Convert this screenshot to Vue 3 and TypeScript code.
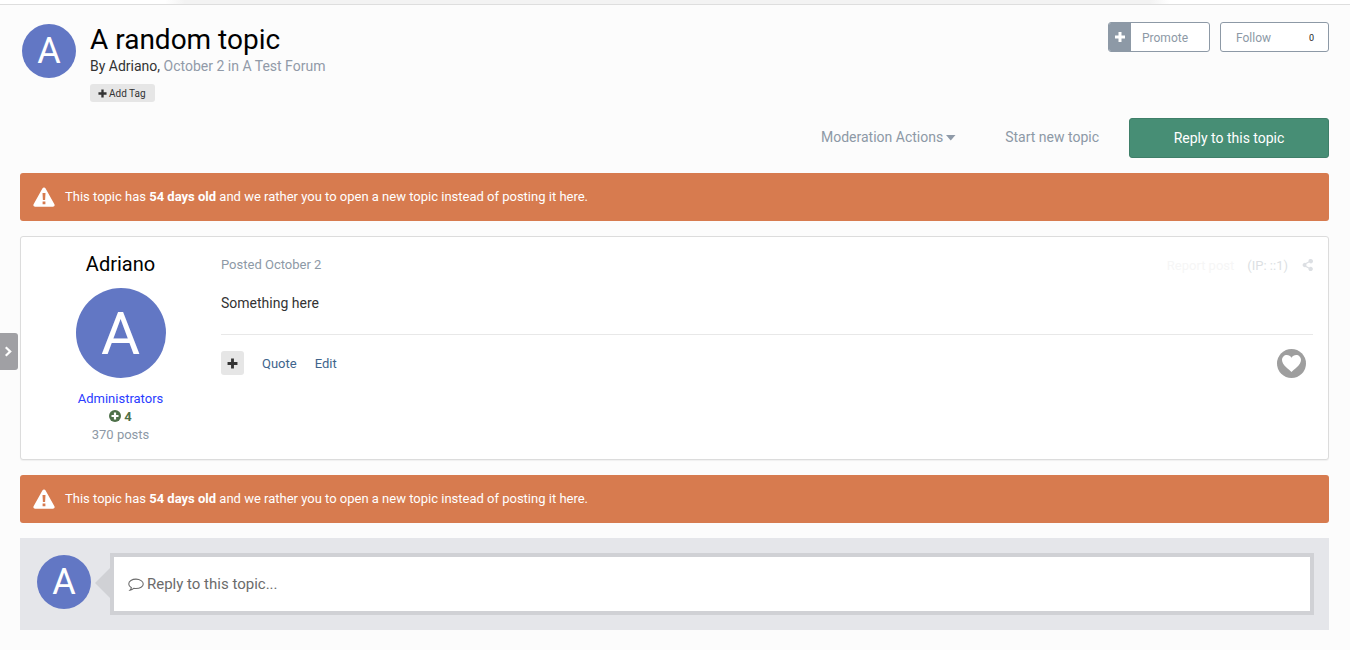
<script setup lang="ts">
const alertText = { before: 'This topic has ', bold: '54 days old', after: ' and we rather you to open a new topic instead of posting it here.' }
const alerts = [0, 1]
</script>

<template>
  <div class="page">
    <div class="topstrip"></div>

    <header class="head">
      <div class="avatar av54">A</div>
      <div class="headtext">
        <h1 class="title">A random topic</h1>
        <p class="byline">By Adriano, <span class="muted">October 2 in A Test Forum</span></p>
        <span class="addtag">
          <svg class="plus9" viewBox="0 0 10 10"><path d="M3.700 0.500h2.600v3.200h3.200v2.600H6.300v3.200H3.700V6.300H0.500V3.700h3.200z" fill="#333"/></svg>
          Add Tag
        </span>
      </div>
      <div class="headbtns">
        <div class="promote">
          <span class="promoteicon"><svg width="10" height="10" viewBox="0 0 10 10"><path d="M3.500 0h3v3.500H10v3H6.500V10h-3V6.500H0v-3h3.500z" fill="#fff"/></svg></span>
          <span class="promotelabel">Promote</span>
        </div>
        <div class="follow"><span class="followlabel">Follow</span><span class="count">0</span></div>
      </div>
    </header>

    <div class="actions">
      <span class="actionlink">Moderation Actions <svg class="caret" viewBox="0 0 10 6"><path d="M0 0h9.500L4.750 5.500z" fill="#8f9aa8"/></svg></span>
      <span class="actionlink start">Start new topic</span>
      <span class="replybtn">Reply to this topic</span>
    </div>

    <template v-for="(a, i) in alerts" :key="a">
      <div class="alert">
        <svg class="warn" width="22" height="20" viewBox="0 0 22 20">
          <path d="M11 .6c.7 0 1.300.4 1.600 1l8.800 15.600c.7 1.200-.2 2.600-1.600 2.600H2.200C.8 19.800-.1 18.400.6 17.200L9.400 1.600c.3-.6.900-1 1.600-1z" fill="#fff"/>
          <path d="M9.500 6h3l-.4 7h-2.200zM9.600 14.500h2.800v2.800H9.600z" fill="#d77b4f"/>
        </svg>
        <span class="alerttext">{{ alertText.before }}<b>{{ alertText.bold }}</b>{{ alertText.after }}</span>
      </div>

      <article v-if="i === 0" class="post">
        <aside class="author">
          <div class="authorname">Adriano</div>
          <div class="avatar av90">A</div>
          <div class="group">Administrators</div>
          <div class="rep">
            <svg width="12" height="12" viewBox="0 0 12 12"><circle cx="6" cy="6" r="6" fill="#4e7049"/><path d="M4.900 2.500h2.200v2.400h2.400v2.200H7.100v2.400H4.900V7.100H2.500V4.900h2.400z" fill="#fff"/></svg>
            <b>4</b>
          </div>
          <div class="posts">370 posts</div>
        </aside>
        <div class="body">
          <div class="meta">
            <span class="posted">Posted October 2</span>
            <span class="tools">
              <span class="report">Report post</span>
              <span class="ip">(IP: ::1)</span>
              <svg width="11" height="12" viewBox="0 0 11 12"><path d="M8.800 0a2.200 2.200 0 1 1-1.700 3.600L4.300 5.100a2.300 2.300 0 0 1 0 1.800l2.800 1.500a2.200 2.200 0 1 1-.6 1.100L3.700 8a2.200 2.200 0 1 1 0-4l2.800-1.500A2.200 2.200 0 0 1 8.800 0z" fill="#dcdfe3"/></svg>
            </span>
          </div>
          <p class="content">Something here</p>
          <div class="controls">
            <span class="plusbtn"><svg width="11" height="11" viewBox="0 0 10 10"><path d="M3.700 0.500h2.600v3.200h3.200v2.600H6.300v3.200H3.700V6.300H0.500V3.700h3.200z" fill="#333"/></svg></span>
            <span class="ctl quote">Quote</span>
            <span class="ctl">Edit</span>
            <span class="like">
              <svg width="19" height="17" viewBox="0 0 18 16"><path d="M9 16C7 13.800 0 9.500 0 4.700 0 2 2.100 0 4.600 0 6.400 0 8 1 9 2.600 10 1 11.600 0 13.400 0 15.900 0 18 2 18 4.700 18 9.500 11 13.800 9 16z" fill="#fff"/></svg>
            </span>
          </div>
        </div>
      </article>
    </template>

    <section class="replyarea">
      <div class="avatar av54">A</div>
      <div class="replybox">
        <svg class="bubble" width="16" height="14" viewBox="0 0 15 13"><path d="M7.500 1C3.800 1 .7 3 .7 5.500c0 1.500 1 2.700 2.500 3.500-.2.900-.7 1.700-1.300 2.300 1.300-.2 2.500-.8 3.500-1.700.7.100 1.400.2 2.100.2 3.700 0 6.800-1.900 6.800-4.300S11.200 1 7.500 1z" fill="none" stroke="#6b6b6b" stroke-width="1"/></svg>
        <span>Reply to this topic...</span>
      </div>
    </section>
  </div>
  <span class="drawer"><svg width="8" height="11" viewBox="0 0 8 11"><path d="M1.500 0.500L6.800 5.500 1.500 10.500 0 8.900 3.600 5.500 0 2.100z" fill="#fff"/></svg></span>
</template>

<style scoped>
.page {
  box-sizing: border-box;
  height: 650px;
  width: 1350px;
  padding: 0 21px 0 20px;
  background: #fcfcfc;
  font-family: Roboto, "Liberation Sans", sans-serif;
  font-size: 13px;
  overflow: hidden;
}
.topstrip {
  height: 4px;
  margin: 0 -21px 0 -20px;
  background: linear-gradient(90deg, #fff 165px, #f3f3f3 185px, #f3f3f3 1150px, #fff 1170px);
  border-bottom: 1px solid #dedede;
}
.head {
  display: flex;
  height: 113px;
  padding: 19px 0 0 2px;
  box-sizing: border-box;
}
.avatar {
  flex: none;
  border-radius: 50%;
  background: #6277c4;
  color: #fff;
  display: flex;
  align-items: center;
  justify-content: center;
}
.av54 { width: 54px; height: 54px; font-size: 36px; }
.av90 { width: 90px; height: 90px; font-size: 60px; }
.headtext { margin-left: 14px; flex: 1; }
.title {
  margin: 1px 0 0;
  font-size: 28px;
  font-weight: 400;
  line-height: 30px;
  color: #000;
}
.byline {
  margin: 1px 0 0;
  font-size: 14px;
  line-height: 20px;
  color: #333;
}
.muted { color: #919aa8; }
.addtag {
  display: flex;
  align-items: center;
  gap: 2px;
  width: 65px;
  height: 18px;
  box-sizing: border-box;
  margin-top: 8px;
  padding-left: 8px;
  background: #e6e6e6;
  border-radius: 3px;
  font-size: 10px;
  color: #333;
}
.plus9 { width: 9px; height: 9px; }
.headbtns { display: flex; gap: 10px; margin-top: -2px; align-items: flex-start; }
.promote, .follow {
  display: flex;
  align-items: center;
  height: 30px;
  box-sizing: border-box;
  border: 1px solid #8d99a6;
  border-radius: 3px;
  background: #fff;
  font-size: 12px;
  color: #8d99a6;
}
.promote { width: 102px; overflow: hidden; }
.promoteicon {
  align-self: stretch;
  width: 22px;
  background: #8d99a6;
  display: flex;
  align-items: center;
  justify-content: center;
}
.promotelabel { margin: 1px 0 0 11px; }
.followlabel { margin-top: 1px; }
.follow { width: 109px; padding: 0 14px 0 15px; justify-content: space-between; }
.count { font-size: 9px; margin-top: 2px; color: #222; font-weight: 400; }
.actions {
  display: flex;
  align-items: center;
  justify-content: flex-end;
  height: 40px;
}
.actionlink { font-size: 14px; color: #8d99a6; display: flex; align-items: center; gap: 3px; margin-top: -2px; }
.caret { width: 10px; height: 6px; margin-top: 1px; }
.start { margin-left: 49px; }
.replybtn {
  margin-left: 30px;
  width: 200px;
  height: 40px;
  box-sizing: border-box;
  background: #478e75;
  border: 1px solid #3f7f69;
  border-radius: 3px;
  color: #fff;
  font-size: 14px;
  display: flex;
  align-items: center;
  justify-content: center;
}
.alert {
  display: flex;
  align-items: center;
  gap: 10px;
  height: 48px;
  margin-top: 15px;
  padding-left: 13px;
  background: #d77b4f;
  border-radius: 3px;
  color: #fff;
  font-size: 13px;
}
.alert b { font-weight: 700; }
.alerttext { margin-top: -2px; }
.warn { margin-top: -1px; }
.post {
  display: flex;
  box-sizing: border-box;
  height: 224px;
  margin-top: 15px;
  background: #fff;
  border: 1px solid #dcdcdc;
  border-radius: 3px;
  box-shadow: 0 1px 1px rgba(0,0,0,.05);
}
.author {
  width: 199px;
  flex: none;
  display: flex;
  flex-direction: column;
  align-items: center;
  padding-top: 15px;
  box-sizing: border-box;
}
.authorname { font-size: 20px; line-height: 24px; color: #000; }
.author .avatar { margin-top: 12px; }
.group { margin-top: 12px; line-height: 18px; color: #2a3cff; }
.rep {
  display: flex;
  align-items: center;
  gap: 3px;
  height: 18px;
  margin-top: -1px;
  margin-bottom: 1px;
  color: #4e7049;
  font-size: 13px;
}
.posts { line-height: 18px; color: #8d99a6; }
.body { flex: 1; padding: 0 15px 0 1px; }
.meta {
  display: flex;
  justify-content: space-between;
  align-items: center;
  height: 18px;
  margin-top: 18px;
}
.posted { color: #8d99a6; }
.tools { display: flex; align-items: center; gap: 13px; margin-top: 2px; }
.report { color: #f6f6f6; }
.ip { color: #dcdfe3; margin-right: 1px; }
.content { margin: 0; padding-top: 20px; height: 62px; box-sizing: border-box; font-size: 14px; line-height: 20px; color: #333; border-bottom: 1px solid #e8e8e8; }
.controls { display: flex; align-items: center; height: 57px; }
.plusbtn {
  width: 23px;
  height: 24px;
  margin-top: -1px;
  background: #e6e6e6;
  border-radius: 3px;
  display: flex;
  align-items: center;
  justify-content: center;
}
.ctl { font-size: 13px; color: #40648c; margin-left: 18px; }
.quote { margin-left: 18px; }
.like {
  margin-left: auto;
  margin-right: 7px;
  margin-top: -1px;
  width: 29px;
  height: 29px;
  border-radius: 50%;
  background: #9e9e9e;
  display: flex;
  align-items: center;
  justify-content: center;
}
.replyarea {
  display: flex;
  align-items: flex-start;
  box-sizing: border-box;
  height: 92px;
  margin-top: 15px;
  padding: 15px 15px 0 17px;
  background: #e5e6ea;
}
.replyarea .avatar { margin-top: 2px; }
.replybox {
  position: relative;
  flex: 1;
  height: 62px;
  margin-left: 19px;
  box-sizing: border-box;
  border: 4px solid #d0d1d5;
  background: #fff;
  display: flex;
  align-items: center;
  gap: 3px;
  padding-left: 14px;
  font-size: 15px;
  color: #6b6b6b;
}
.replybox::before {
  content: "";
  position: absolute;
  left: -19px;
  top: 11px;
  border: 15px solid transparent;
  border-right-color: #d0d1d5;
  border-left-width: 0;
}
.bubble { margin-top: 1px; }
.drawer {
  position: absolute;
  left: 0;
  top: 333px;
  width: 18px;
  height: 37px;
  background: #a0a0a4;
  border-radius: 0 3px 3px 0;
  display: flex;
  align-items: center;
  justify-content: center;
}
</style>
